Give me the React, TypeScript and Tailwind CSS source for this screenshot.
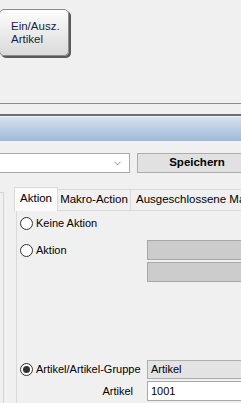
import { ChevronDown } from "lucide-react";

function Radio({ checked }: { checked?: boolean }) {
  return (
    <span className="flex h-[13px] w-[13px] shrink-0 items-center justify-center rounded-full border border-[#333333] bg-white">
      {checked && <span className="h-[7px] w-[7px] rounded-full bg-[#333333]" />}
    </span>
  );
}

export default function App() {
  return (
    <div
      className="relative h-[403px] w-[241px] overflow-hidden bg-[#f0f0f0] text-[11px] text-black"
      style={{ fontFamily: '"Liberation Sans", Arial, sans-serif' }}
    >
      {/* toolbar */}
      <div className="h-[103px] pt-[9px]">
        <button className="-ml-[1px] flex h-[47px] w-[70px] flex-col items-start justify-center rounded-[5px] border border-[#8a8a8a] bg-gradient-to-b from-[#fdfdfd] to-[#dadada] pl-[11px] text-left text-[11.5px] leading-[13px] text-[#1c1c44] shadow-[2px_2px_0_#5a5a5a]">
          <span>Ein/Ausz.</span>
          <span>Artikel</span>
        </button>
      </div>
      <div className="h-px bg-[#8c8c8c]" />
      <div className="h-[10px]" />
      <div className="h-[2px] bg-[#6e6e6e]" />
      <div className="h-px bg-[#eef3f9]" />
      <div className="h-[24px] bg-gradient-to-b from-[#d5e2f0] to-[#a0b8d5]" />
      <div className="h-[12px]" />

      {/* combo + save */}
      <div className="flex h-[20px] w-[270px] gap-[7px]">
        <div className="-ml-[2px] flex w-[132px] shrink-0 items-center justify-end border border-[#a9a9a9] bg-white pr-[6px]">
          <ChevronDown className="h-[11px] w-[11px] text-[#555555]" strokeWidth={1.5} />
        </div>
        <button className="flex w-[120px] shrink-0 items-center justify-center border border-[#adadad] bg-[#e1e1e1] text-[11.5px] font-bold">
          Speichern
        </button>
      </div>

      {/* body */}
      <div className="flex w-[280px]">
        <div className="mt-[19px] h-[240px] w-[4px] shrink-0 border-r border-t border-[#d4d4d4]" />
        <div className="ml-[10px] mt-[14px] w-[262px] shrink-0 overflow-hidden">
          {/* tab strip */}
          <div className="flex h-[23px] items-end whitespace-nowrap text-[11.5px]">
            <div className="relative z-10 -mb-px flex h-[24px] w-[44px] shrink-0 items-center justify-center border border-b-0 border-[#d9d9d9] bg-[#fbfbfb] pb-[2px]">
              Aktion
            </div>
            <div className="flex h-[21px] w-[73px] shrink-0 items-center justify-center border border-l-0 border-b-0 border-[#d9d9d9] bg-[#f0f0f0]">
              Makro-Action
            </div>
            <div className="flex h-[21px] shrink-0 items-center border border-l-0 border-b-0 border-[#d9d9d9] bg-[#f0f0f0] pl-[5px] pr-[8px]">
              Ausgeschlossene Markierungen
            </div>
          </div>
          {/* tab page */}
          <div className="ml-[2px] h-[220px] border-l border-t border-[#d9d9d9] bg-[#f0f0f0]">
            <div className="ml-[3px] mt-[5px] flex h-[14px] items-center gap-[3px]">
              <Radio />
              <span>Keine Aktion</span>
            </div>
            <div className="mt-[10px] flex">
              <div className="flex h-[20px] w-[130px] shrink-0 items-center gap-[3px] pl-[3px]">
                <Radio />
                <span>Aktion</span>
              </div>
              <div className="flex flex-1 flex-col gap-[2px]">
                <div className="h-[20px] border border-[#a6a6a6] bg-[#cccccc]" />
                <div className="h-[20px] border border-[#a6a6a6] bg-[#cccccc]" />
              </div>
            </div>
            <div className="mt-[78px] flex">
              <div className="flex h-[19px] w-[130px] shrink-0 items-center gap-[3px] pl-[3px] whitespace-nowrap">
                <Radio checked />
                <span>Artikel/Artikel-Gruppe</span>
              </div>
              <div className="flex h-[19px] flex-1 items-center border border-[#adadad] bg-[#e3e3e3] pl-[3px]">
                Artikel
              </div>
            </div>
            <div className="mt-[2px] flex">
              <div className="flex h-[20px] w-[130px] shrink-0 items-center justify-end pr-[14px]">
                Artikel
              </div>
              <div className="flex h-[20px] flex-1 items-center border border-[#a9a9a9] bg-white pl-[3px]">
                1001
              </div>
            </div>
          </div>
        </div>
      </div>
    </div>
  );
}
